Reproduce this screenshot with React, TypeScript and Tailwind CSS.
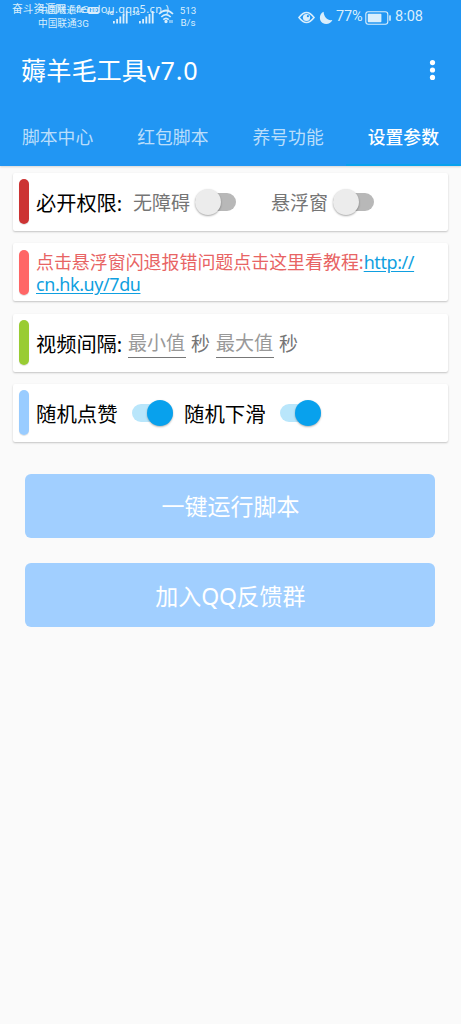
import type { ReactNode } from "react";

const tabs = ["脚本中心", "红包脚本", "养号功能", "设置参数"];

function Signal({ label }: { label: string }) {
  return (
    <svg width="23" height="16" viewBox="0 0 23 16" fill="#d9eefc">
      <text x="0" y="6" fontSize="6" fontWeight="700">
        {label}
      </text>
      <rect x="7" y="12" width="1.8" height="2.5" />
      <rect x="10.2" y="10" width="1.8" height="4.5" />
      <rect x="13.4" y="7.5" width="1.8" height="7" />
      <rect x="16.6" y="5" width="1.8" height="9.5" />
      <rect x="19.8" y="2" width="1.8" height="12.5" />
    </svg>
  );
}

function StatusBar() {
  return (
    <div className="relative flex h-[36px] items-start text-[#d9eefc]">
      <div className="absolute left-[12px] top-[1px] flex whitespace-nowrap text-[10.8px] leading-[15px] text-[#d9eefc]">
        <span>奋斗资源网</span>
        <span className="ml-[3px] text-[11px] tracking-[0.35px]">( fendou.qqn5.cn )</span>
      </div>
      <div className="ml-[38px] w-[68px] shrink-0 whitespace-nowrap pt-[3px] text-[9.5px] leading-[14px]">
        <div className="flex items-center">
          中国联通4G
          <span className="flex h-[7px] items-center rounded-[1.5px] bg-[#d9eefc] px-[1px] text-[6px] font-bold leading-none text-[#2196f3]">
            HD
          </span>
        </div>
        <div className="font-['Roboto','Noto_Sans_CJK_SC',sans-serif] text-[9.7px]">中国联通3G</div>
      </div>
      <div className="flex pt-[9px]">
        <Signal label="4G" />
        <div className="ml-[3px]">
          <Signal label="3G" />
        </div>
      </div>
      <svg className="mt-[9px] ml-[3px]" width="16" height="15" viewBox="0 0 16 15" fill="none" stroke="#d9eefc" strokeWidth="1.7">
        <path d="M1 5Q8-2 15 5M3.3 8Q8 3.2 12.7 8M5.3 10.6Q8 8 10.7 10.6" />
        <circle cx="8" cy="12.5" r="0.8" fill="#d9eefc" />
        <path d="M12 11v3M14 11v3" strokeWidth="1" />
      </svg>
      <div className="ml-[4px] w-[20px] pt-[5px] text-center font-['Roboto',sans-serif] text-[9.8px] leading-[12px]">
        513
        <br />
        B/s
      </div>
      <div className="ml-auto mr-[37px] flex h-[35px] items-center font-['Roboto',sans-serif] text-[14.5px] leading-none">
        <svg width="17" height="13" viewBox="0 0 17 13" fill="none" stroke="#d9eefc" strokeWidth="1.6">
          <path d="M1 6.5Q8.5-3.5 16 6.5Q8.5 16.5 1 6.5Z" />
          <circle cx="8.5" cy="6.5" r="3.6" fill="#d9eefc" stroke="none" />
          <circle cx="9.9" cy="5.2" r="1.1" fill="#2196f3" stroke="none" />
        </svg>
        <svg className="ml-[4px]" width="14" height="14" viewBox="0 0 14 14" fill="#d9eefc">
          <path d="M4.6 0.8C-0.2 3-0.2 9.6 3.6 12C7 14.2 11.6 13 13.4 9C8.8 10 4.8 6 4.6 0.8Z" />
        </svg>
        <span className="ml-[3px] w-[28px] whitespace-nowrap tracking-[-0.2px]">77%</span>
        <svg className="ml-[1px]" width="27" height="14" viewBox="0 0 27 14" fill="none">
          <rect x="0.8" y="0.8" width="22" height="12.4" rx="2.5" stroke="#d9eefc" strokeWidth="1.1" />
          <rect x="2.8" y="2.8" width="13.6" height="8.4" rx="0.8" fill="#d9eefc" />
          <rect x="24.2" y="4.2" width="1.6" height="5.6" rx="0.6" fill="#d9eefc" />
        </svg>
        <span className="ml-[3px] w-[29px] whitespace-nowrap">8:08</span>
      </div>
    </div>
  );
}

function Toggle({ on = false }: { on?: boolean }) {
  return (
    <span className="flex h-[26px] w-[41px] shrink-0 items-center">
      <span className={on ? "flex h-[18px] w-[41px] items-center justify-end rounded-full bg-[#b9e6fb]" : "flex h-[18px] w-[41px] items-center rounded-full bg-[#b8b8b8]"}>
        <span
          className={
            on
              ? "size-[26px] shrink-0 rounded-full bg-[#08a1ed] shadow-[0_1px_2px_rgba(0,0,0,0.3)]"
              : "size-[26px] shrink-0 rounded-full bg-[#ececec] shadow-[0_1px_2px_rgba(0,0,0,0.35)]"
          }
        />
      </span>
    </span>
  );
}

function Card({ bar, children }: { bar: string; children: ReactNode }) {
  return (
    <section className="flex h-[58px] items-center rounded-[2px] bg-white pl-[6px] shadow-[0_1px_2px_rgba(0,0,0,0.22)]">
      <span className={`mr-[7px] h-[45px] w-[10.5px] shrink-0 rounded-full shadow-[0_1px_1px_rgba(0,0,0,0.12)] ${bar}`} />
      {children}
    </section>
  );
}

export default function App() {
  return (
    <div className="flex min-h-[1024px] w-[461px] flex-col bg-[#fafafa] font-['Noto_Sans','Noto_Sans_CJK_SC',sans-serif]">
      <header className="h-[166px] bg-[#2196f3] text-white shadow-[0_1px_2px_rgba(0,0,0,0.15)]">
        <StatusBar />
        <div className="flex h-[70px] items-center justify-between pl-[21px] pr-[25px]">
          <h1 className="text-[25.2px] leading-none">
            薅羊毛工具<span className="tracking-[0.8px]">v7.0</span>
          </h1>
          <svg width="7" height="22" viewBox="0 0 7 22" fill="white">
            <circle cx="3.5" cy="2.6" r="2.6" />
            <circle cx="3.5" cy="10" r="2.6" />
            <circle cx="3.5" cy="17.4" r="2.6" />
          </svg>
        </div>
        <nav className="grid h-[60px] grid-cols-4">
          {tabs.map((tab, i) => (
            <button
              key={tab}
              className={
                i === 3
                  ? "border-b-2 border-[#08a1ed] pt-[5px] text-[17.8px] font-medium leading-none"
                  : "border-b-2 border-transparent pt-[5px] text-[17.8px] leading-none text-white/70"
              }
            >
              {tab}
            </button>
          ))}
        </nav>
      </header>

      <main className="flex flex-col gap-[12.4px] pl-[12.5px] pr-[13px] pt-[6.8px]">
        <Card bar="bg-[#cc3333]">
          <span className="w-[97px] pt-[3px] text-[20.2px] leading-none">必开权限:</span>
          <span className="w-[62px] pt-[3px] text-[19px] leading-none text-[#757575]">无障碍</span>
          <Toggle />
          <span className="ml-[35px] w-[62px] pt-[3px] text-[19px] leading-none text-[#757575]">悬浮窗</span>
          <Toggle />
        </Card>
        <Card bar="bg-[#ff6666]">
          <p className="pt-[2px] text-[17.95px] leading-[22px] text-[#e86464]">
            点击悬浮窗闪退报错问题点击这里看教程:
            <a className="text-[#0f9fe0] underline underline-offset-2 tracking-[-0.4px]">
              http://
              <br />
              cn.hk.uy/7du
            </a>
          </p>
        </Card>
        <Card bar="bg-[#99cc33]">
          <span className="w-[92px] pt-[3px] text-[20.2px] leading-none">视频间隔:</span>
          <span className="flex h-[31px] w-[58px] items-center border-b border-[#777777] pt-[3px] text-[19px] leading-none text-[#999999]">最小值</span>
          <span className="mx-[5px] w-[20px] pt-[3px] text-[19px] leading-none text-[#757575]">秒</span>
          <span className="flex h-[31px] w-[58px] items-center border-b border-[#777777] pt-[3px] text-[19px] leading-none text-[#999999]">最大值</span>
          <span className="ml-[5px] pt-[3px] text-[19px] leading-none text-[#757575]">秒</span>
        </Card>
        <Card bar="bg-[#99ccff]">
          <span className="w-[96px] pt-[2px] text-[20.4px] leading-none">随机点赞</span>
          <Toggle on />
          <span className="ml-[11px] w-[96px] pt-[2px] text-[20.4px] leading-none">随机下滑</span>
          <Toggle on />
        </Card>
      </main>

      <div className="mt-[31.7px] flex flex-col gap-[25.5px] pl-[25.4px] pr-[25.6px]">
        <button className="h-[64px] rounded-[6px] bg-[#a1cfff] pt-[2px] text-[23px] leading-none text-white">一键运行脚本</button>
        <button className="h-[64px] rounded-[6px] bg-[#a1cfff] pt-[2px] text-[23px] leading-none text-white">
          加入<span className="tracking-[-0.4px]">QQ</span>反馈群
        </button>
      </div>
    </div>
  );
}
